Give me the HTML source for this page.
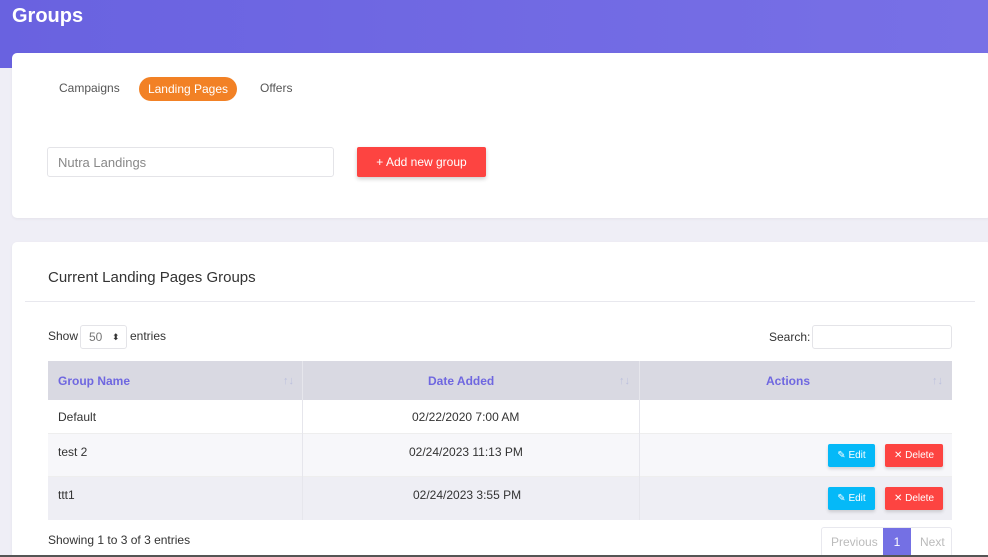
<!DOCTYPE html><html><head><style>
*{margin:0;padding:0;box-sizing:border-box}
html,body{width:988px;height:557px;overflow:hidden}
body{background:#efeef6;font-family:"Liberation Sans",sans-serif;position:relative;color:#333}
.a{position:absolute;white-space:nowrap}
.hdr{left:0;top:0;width:988px;height:68px;background:linear-gradient(90deg,#6962e0,#7870e6)}
.card{background:#fff;border-radius:5px;box-shadow:0 1px 3px rgba(0,0,0,.05)}
.btn{color:#fff;font-size:10px;text-align:center;border-radius:2px;line-height:23px;box-shadow:0 2px 3px rgba(0,0,0,.15)}
</style></head><body>
<div class="a hdr"></div>
<div class="a" style="left:12px;top:5px;color:#fff;font-size:20px;font-weight:bold">Groups</div>
<div class="a card" style="left:12px;top:53px;width:980px;height:165px"></div>
<div class="a" style="left:59px;top:81px;font-size:12px;color:#555">Campaigns</div>
<div class="a" style="left:139px;top:77px;width:98px;height:24px;border-radius:12px;background:#f28125;color:#fff;font-size:12px;text-align:center;line-height:24px">Landing Pages</div>
<div class="a" style="left:260px;top:81px;font-size:12px;color:#555">Offers</div>
<div class="a" style="left:47px;top:147px;width:287px;height:30px;border:1px solid #e4e4e8;border-radius:3px;font-size:13px;color:#888;padding:7px 10px">Nutra Landings</div>
<div class="a" style="left:357px;top:147px;width:129px;height:30px;background:#fd4441;border-radius:2px;color:#fff;font-size:12px;text-align:center;line-height:30px;box-shadow:0 2px 4px rgba(0,0,0,.2)">+ Add new group</div>
<div class="a card" style="left:12px;top:242px;width:980px;height:320px"></div>
<div class="a" style="left:48px;top:269px;font-size:15px;color:#333">Current Landing Pages Groups</div>
<div class="a" style="left:25px;top:301px;width:950px;height:1px;background:#e8e8ee"></div>
<div class="a" style="left:48px;top:329px;font-size:12px">Show</div>
<div class="a" style="left:80px;top:325px;width:47px;height:24px;border:1px solid #e4e4e8;border-radius:3px;font-size:12px;color:#777;line-height:22px;padding-left:8px">50<span style="position:absolute;left:31px;top:0;font-size:9px;color:#333">⬍</span></div>
<div class="a" style="left:130px;top:329px;font-size:12px">entries</div>
<div class="a" style="left:769px;top:330px;font-size:12px">Search:</div>
<div class="a" style="left:812px;top:325px;width:140px;height:24px;border:1px solid #e4e4e8;border-radius:3px"></div>
<div class="a" style="left:48px;top:361px;width:904px;height:39px;background:#d9d9e2"></div>
<div class="a" style="left:48px;top:400px;width:904px;height:34px;background:#fff;border-bottom:1px solid #eee"></div>
<div class="a" style="left:48px;top:434px;width:904px;height:43px;background:#f7f7fa;border-bottom:1px solid #eee"></div>
<div class="a" style="left:48px;top:477px;width:904px;height:43px;background:#eeeef4"></div>
<div class="a" style="left:302px;top:361px;width:1px;height:159px;background:#e6e6ec"></div>
<div class="a" style="left:639px;top:361px;width:1px;height:159px;background:#e6e6ec"></div>
<div class="a" style="left:58px;top:374px;font-size:12px;font-weight:bold;color:#6f67e0">Group Name</div>
<div class="a" style="left:428px;top:374px;font-size:12px;font-weight:bold;color:#6f67e0">Date Added</div>
<div class="a" style="left:766px;top:374px;font-size:12px;font-weight:bold;color:#6f67e0">Actions</div>
<div class="a" style="left:283px;top:375px;font-size:11px;color:#bcc0dd">↑↓</div>
<div class="a" style="left:619px;top:375px;font-size:11px;color:#bcc0dd">↑↓</div>
<div class="a" style="left:932px;top:375px;font-size:11px;color:#bcc0dd">↑↓</div>
<div class="a" style="left:58px;top:410px;font-size:12px">Default</div>
<div class="a" style="left:412px;top:410px;font-size:12px">02/22/2020 7:00 AM</div>
<div class="a" style="left:58px;top:445px;font-size:12px">test 2</div>
<div class="a" style="left:409px;top:445px;font-size:12px">02/24/2023 11:13 PM</div>
<div class="a" style="left:58px;top:488px;font-size:12px">ttt1</div>
<div class="a" style="left:413px;top:488px;font-size:12px">02/24/2023 3:55 PM</div>
<div class="a btn" style="left:828px;top:444px;width:47px;background:#05b9f8">✎ Edit</div>
<div class="a btn" style="left:885px;top:444px;width:58px;background:#fd4441">✕ Delete</div>
<div class="a btn" style="left:828px;top:487px;width:47px;background:#05b9f8">✎ Edit</div>
<div class="a btn" style="left:885px;top:487px;width:58px;background:#fd4441">✕ Delete</div>
<div class="a" style="left:48px;top:533px;font-size:12px">Showing 1 to 3 of 3 entries</div>
<div class="a" style="left:821px;top:527px;width:131px;height:30px;border:1px solid #e8e8ee;border-radius:3px;font-size:12px;color:#bbb;line-height:28px"><span style="position:absolute;left:9px">Previous</span><span style="position:absolute;left:61px;width:28px;height:29px;top:0;background:#7470e4;color:#fff;text-align:center">1</span><span style="position:absolute;left:98px">Next</span></div>
<div class="a" style="left:0;top:555px;width:988px;height:2px;background:#555"></div>
</body></html>
